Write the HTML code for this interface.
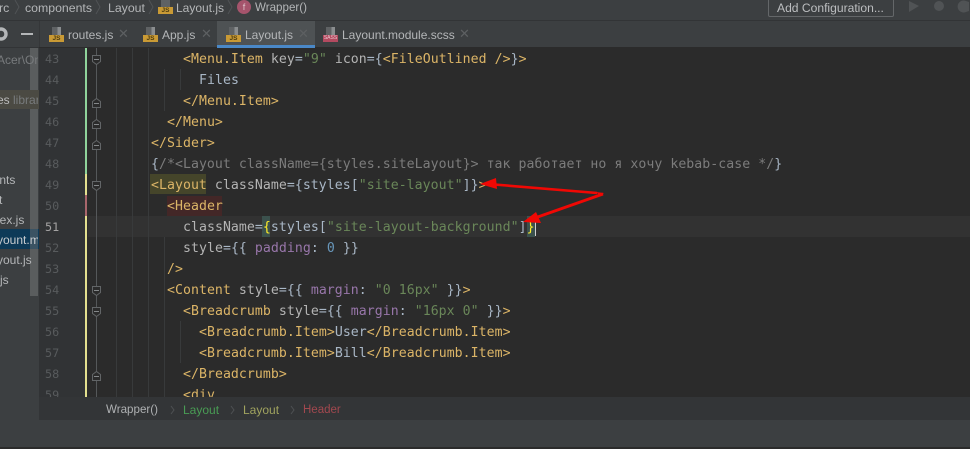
<!DOCTYPE html>
<html><head><meta charset="utf-8"><style>
html,body{margin:0;padding:0;background:#2b2b2b}
#p{position:relative;width:970px;height:449px;overflow:hidden;background:#2b2b2b;font-family:"Liberation Sans",sans-serif}
#p div{position:absolute}
.t{font-size:12px;color:#b4b6b8;white-space:pre;line-height:16px}
.c{font-family:"DejaVu Sans Mono","Liberation Mono",monospace;font-size:13.2px;line-height:21px;height:21px;white-space:pre;color:#a9b7c6;letter-spacing:.05px;margin-top:1px}
.n{font-family:"DejaVu Sans Mono","Liberation Mono",monospace;font-size:11.8px;line-height:21px;color:#585b5d;left:45px;margin-top:1px}
.g{color:#dcb567}.a{color:#b4b4b4}.s{color:#6a8759}.v{color:#9876aa}.o{color:#7c7c7c}.b{color:#6897bb}
.i{width:1px;background:#383a3b}
.x{color:#5d6062;font-size:13px}
.js{width:15px;height:7px;background:#c99a35;color:#4a3a10;font-size:6.5px;line-height:7px;text-align:center;font-weight:bold}
.sa{width:15px;height:7px;background:#b34a60;color:#e8c5cd;font-size:5px;line-height:7px;text-align:center}
.d{width:9px;height:8px;background:linear-gradient(90deg,#5f6264 60%,#8a8d8f 60%)}
</style></head><body><div id="p">

<div style="left:0;top:0;width:970px;height:20px;background:#3c3f41"></div>
<div style="left:0;top:20px;width:970px;height:1px;background:#323436"></div>
<div class="t" style="left:-1px;top:0;font-size:12.3px">rc</div>
<div class="t" style="left:25px;top:0;font-size:12.3px">components</div>
<div class="t" style="left:108px;top:0;font-size:12.3px">Layout</div>
<div class="t" style="left:176px;top:0;">Layout.js</div>
<div class="t" style="left:255px;top:0;font-size:11.6px">Wrapper()</div>
<svg style="position:absolute;left:0;top:0" width="260" height="20" fill="none" stroke="#505355"><path d="M15 0l4 7-4 7M96 0l4 7-4 7M149 0l4 7-4 7M228 0l4 7-4 7"/></svg>
<div style="left:161px;top:0;width:9px;height:7px;background:#5f6264"></div>
<div class="js" style="left:158px;top:7px">JS</div>
<div style="left:237px;top:0;width:14px;height:14px;border-radius:7px;background:#a5546c;color:#e0c5cd;font-size:9px;line-height:14px;text-align:center">f</div>

<div style="left:768px;top:-6px;width:124px;height:21px;border:1px solid #646769;border-radius:2px"></div>
<div class="t" style="left:777px;top:0;color:#bcbec0;font-size:12.1px">Add Configuration...</div>
<svg style="position:absolute;left:900px;top:0" width="70" height="16"><path d="M9 1l10 5-10 6z" fill="#505355"/><circle cx="39" cy="6" r="5" fill="#505355"/><path d="M66 1a6 6 0 1 0 0 11l3-1v-9z" fill="#505355"/></svg>

<div style="left:0;top:21px;width:970px;height:26px;background:#3c3f41"></div>
<div style="left:0;top:47px;width:39px;height:1px;background:#323436"></div>
<svg style="position:absolute;left:0;top:25px" width="36" height="18"><circle cx="1" cy="9" r="5" fill="none" stroke="#b4b6b8" stroke-width="3.4"/><path d="M21 9h12" stroke="#b4b6b8" stroke-width="2"/></svg>
<div style="left:39px;top:21px;width:1px;height:26px;background:#353739"></div>

<div style="left:217px;top:21px;width:98px;height:26px;background:#4e5254"></div>
<div style="left:217px;top:45px;width:98px;height:3px;background:#4a88c7"></div>

<div class="d" style="left:52px;top:27px"></div><div class="js" style="left:49px;top:35px">JS</div>
<div class="t" style="left:68px;top:27px">routes.js</div><div class="t x" style="left:118px;top:26px">✕</div>
<div class="d" style="left:146px;top:27px"></div><div class="js" style="left:143px;top:35px">JS</div>
<div class="t" style="left:162px;top:27px">App.js</div><div class="t x" style="left:201px;top:26px">✕</div>
<div class="d" style="left:229px;top:27px"></div><div class="js" style="left:226px;top:35px">JS</div>
<div class="t" style="left:245px;top:27px">Layout.js</div><div class="t x" style="left:298px;top:26px">✕</div>
<div class="d" style="left:326px;top:27px"></div><div class="sa" style="left:323px;top:35px">SASS</div>
<div class="t" style="left:342px;top:27px">Layount.module.scss</div><div class="t x" style="left:459px;top:26px">✕</div>

<div style="left:0;top:48px;width:39px;height:372px;background:#3c3f41"></div>
<div style="left:30px;top:48px;width:8px;height:248px;background:#5a5d5e"></div>
<div style="left:0;top:90px;width:39px;height:19px;background:#4b4a43"></div>
<div style="left:0;top:229px;width:39px;height:20px;background:#0d3a58"></div>
<div style="left:30px;top:229px;width:8px;height:20px;background:#3b5363"></div>
<div class="t" style="left:-3px;top:52px;color:#787b7d;width:41px;overflow:hidden">Acer\On</div>
<div class="t" style="left:-3px;top:92px;width:41px;overflow:hidden;color:#bbb">es <span style="color:#787b7d">librar</span></div>
<div class="t" style="left:-14px;top:172px">nents</div>
<div class="t" style="left:-1px;top:192px">t</div>
<div class="t" style="left:-7px;top:212px">dex.js</div>
<div class="t" style="left:-3px;top:232px;width:41px;overflow:hidden;color:#c8ccd0">yount.m</div>
<div class="t" style="left:-3px;top:252px">yout.js</div>
<div class="t" style="left:0;top:272px">js</div>

<div style="left:39px;top:48px;width:46px;height:349px;background:#313335"></div>
<div style="left:85px;top:48px;width:2px;height:126px;background:#8fd49b"></div>
<div style="left:85px;top:174px;width:2px;height:21px;background:#e3e08f"></div>
<div style="left:85px;top:195px;width:2px;height:21px;background:#a8666c"></div>
<div style="left:85px;top:216px;width:2px;height:181px;background:#e3e08f"></div>

<div style="left:88px;top:216px;width:882px;height:21px;background:#323232"></div>

<div class="i" style="left:116px;top:48px;height:349px"></div>
<div class="i" style="left:132px;top:48px;height:349px"></div>
<div class="i" style="left:148px;top:48px;height:349px"></div>
<div class="i" style="left:164px;top:237px;height:160px"></div>
<div class="i" style="left:164px;top:69px;height:42px"></div>
<div class="i" style="left:180px;top:69px;height:21px"></div>
<div class="i" style="left:180px;top:321px;height:42px"></div>
<div style="left:96px;top:48px;width:1px;height:349px;background:#55585a"></div>

<svg style="position:absolute;left:0;top:0" width="110" height="397" fill="#2b2b2b" stroke="#626567">
<path d="M92.500 55.500h8v6l-4 3-4-3zM92.500 181.500h8v6l-4 3-4-3zM92.500 286.500h8v6l-4 3-4-3zM92.500 307.500h8v6l-4 3-4-3z"/>
<path d="M92.500 107.500h8v-6l-4-3-4 3zM92.500 128.500h8v-6l-4-3-4 3zM92.500 149.500h8v-6l-4-3-4 3zM92.500 380.500h8v-6l-4-3-4 3z"/>
<path stroke="#85888a" d="M94 59.500h5M94 185.500h5M94 290.500h5M94 311.500h5M94 103.500h5M94 124.500h5M94 145.500h5M94 376.500h5"/>
</svg>

<div class="n" style="top:48px">43</div><div class="n" style="top:69px">44</div><div class="n" style="top:90px">45</div><div class="n" style="top:111px">46</div><div class="n" style="top:132px">47</div><div class="n" style="top:153px">48</div><div class="n" style="top:174px">49</div><div class="n" style="top:195px">50</div><div class="n" style="top:216px;color:#a4a3a3">51</div><div class="n" style="top:237px">52</div><div class="n" style="top:258px">53</div><div class="n" style="top:279px">54</div><div class="n" style="top:300px">55</div><div class="n" style="top:321px">56</div><div class="n" style="top:342px">57</div><div class="n" style="top:363px">58</div><div class="n" style="top:384px;height:13px;overflow:hidden">59</div>

<div style="left:150px;top:174px;width:56px;height:20px;background:#45452a"></div>
<div style="left:167px;top:196px;width:55px;height:20px;background:#432727"></div>
<div style="left:262px;top:216px;width:8px;height:21px;background:#3b514d"></div>
<div style="left:527px;top:216px;width:8px;height:21px;background:#3b514d"></div>

<div class="c" style="left:183px;top:48px"><span class="g">&lt;Menu.Item</span><span class="a"> key</span>=<span class="s">"9"</span><span class="a"> icon</span>={<span class="g">&lt;FileOutlined /&gt;</span>}<span class="g">&gt;</span></div>
<div class="c" style="left:199px;top:69px">Files</div>
<div class="c g" style="left:183px;top:90px">&lt;/Menu.Item&gt;</div>
<div class="c g" style="left:167px;top:111px">&lt;/Menu&gt;</div>
<div class="c g" style="left:151px;top:132px">&lt;/Sider&gt;</div>
<div class="c o" style="left:151px;top:153px"><span style="color:#a9b7c6">{</span>/*&lt;Layout className={styles.siteLayout}&gt; так работает но я хочу kebab-case */<span style="color:#a9b7c6">}</span></div>
<div class="c" style="left:151px;top:174px"><span class="g">&lt;Layout</span><span class="a"> className</span>={styles[<span class="s">"site-layout"</span>]}<span class="g">&gt;</span></div>
<div class="c g" style="left:167px;top:195px">&lt;Header</div>
<div class="c" style="left:183px;top:216px"><span class="a">className</span>=<span style="color:#ffef28">{</span>styles[<span class="s">"site-layout-background"</span>]<span style="color:#ffef28">}</span></div>
<div style="left:535px;top:217px;width:1px;height:19px;background:#d0d0d0"></div>
<div class="c" style="left:183px;top:237px"><span class="a">style</span>={{ <span class="v">padding</span>: <span class="b">0</span> }}</div>
<div class="c g" style="left:167px;top:258px">/&gt;</div>
<div class="c" style="left:167px;top:279px"><span class="g">&lt;Content</span><span class="a"> style</span>={{ <span class="v">margin</span>: <span class="s">"0 16px"</span> }}<span class="g">&gt;</span></div>
<div class="c" style="left:183px;top:300px"><span class="g">&lt;Breadcrumb</span><span class="a"> style</span>={{ <span class="v">margin</span>: <span class="s">"16px 0"</span> }}<span class="g">&gt;</span></div>
<div class="c" style="left:199px;top:321px"><span class="g">&lt;Breadcrumb.Item&gt;</span>User<span class="g">&lt;/Breadcrumb.Item&gt;</span></div>
<div class="c" style="left:199px;top:342px"><span class="g">&lt;Breadcrumb.Item&gt;</span>Bill<span class="g">&lt;/Breadcrumb.Item&gt;</span></div>
<div class="c g" style="left:183px;top:363px">&lt;/Breadcrumb&gt;</div>
<div class="c g" style="left:183px;top:384px;height:13px;overflow:hidden">&lt;div</div>

<svg style="position:absolute;left:0;top:0" width="970" height="449" fill="#f00804" stroke="none"><path d="M488 184L597 193" stroke="#f00804" stroke-width="2.600"/><path d="M603 194L532 219" stroke="#f00804" stroke-width="2.800"/><path d="M480 184L496 178 497 189z"/><path d="M523 222L536 212 541 223z"/><path d="M596 192L604 193 600 196z"/></svg>

<div style="left:0;top:397px;width:39px;height:23px;background:#3c3f41"></div>
<div style="left:39px;top:397px;width:931px;height:23px;background:#333537"></div>
<div class="t" style="left:106px;top:402px;font-size:11.6px;color:#afb1b3">Wrapper()</div>
<div class="t" style="left:183px;top:402px;color:#499c54">Layout</div>
<div class="t" style="left:243px;top:402px;color:#a0a35f">Layout</div>
<div class="t" style="left:303px;top:402px;color:#a2484f;font-size:11.5px">Header</div>
<svg style="position:absolute;left:165px;top:403px" width="130" height="14" fill="none" stroke="#4e5153"><path d="M6 3l3 4-3 4M66 3l3 4-3 4M126 3l3 4-3 4"/></svg>
<div style="left:0;top:420px;width:970px;height:27px;background:#3c3f41"></div>
<div style="left:0;top:447px;width:970px;height:2px;background:#2b2b2b"></div>
</div></body></html>
